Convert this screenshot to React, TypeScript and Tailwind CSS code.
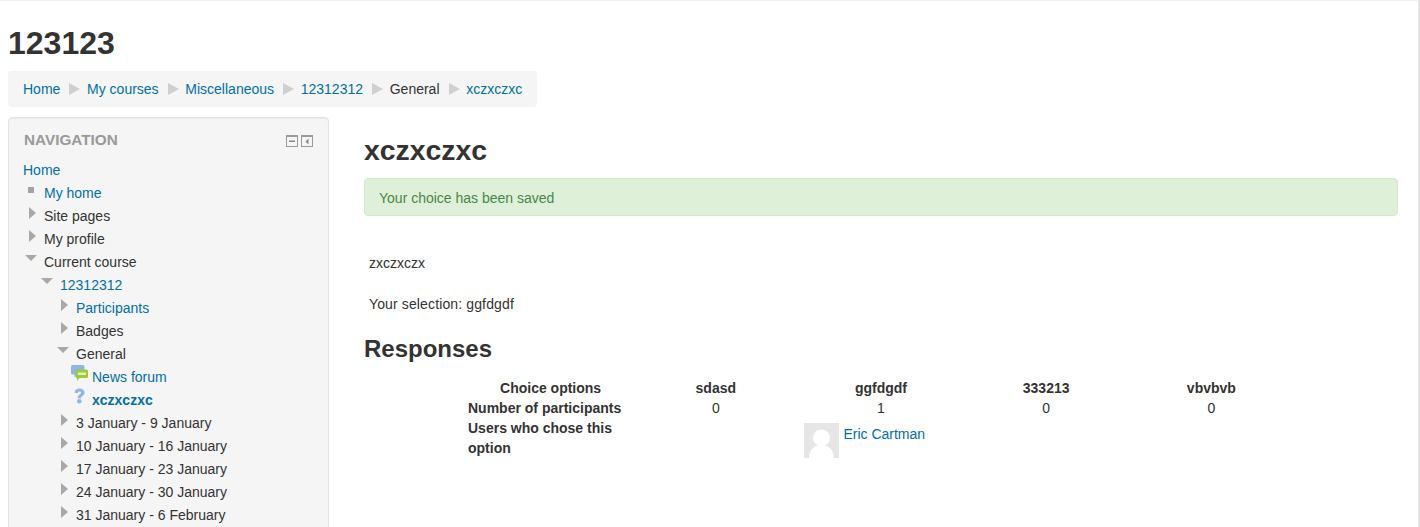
const link = "text-[#0070a8]"

function ArrowRight() {
  return (
    <svg width="7" height="12" viewBox="0 0 7 12" className="-mt-[5px] ml-[6px] shrink-0">
      <path d="M0 0 L7 6 L0 12 Z" fill="#a8a8a8" />
    </svg>
  )
}

function ArrowDown() {
  return (
    <svg width="12" height="6" viewBox="0 0 12 6" className="-mt-[8px] ml-[2px] shrink-0">
      <path d="M0 0 H12 L6 6 Z" fill="#a8a8a8" />
    </svg>
  )
}

function Bullet() {
  return <div className="-mt-[6px] ml-[5px] h-[6px] w-[6px] shrink-0 bg-[#a3a3a3]" />
}

function ForumIcon() {
  return (
    <svg width="17" height="17" viewBox="0 0 17 17" className="-mt-[6px] -mr-[1px] shrink-0">
      <path d="M1.5 0 H12 Q13.5 0 13.5 1.5 V8 Q13.5 9.5 12 9.5 H6 L3.5 12.5 V9.5 H1.5 Q0 9.5 0 8 V1.5 Q0 0 1.5 0 Z" fill="#8fb4ea" />
      <path d="M6 4.5 H15.5 Q17 4.5 17 6 V11.5 Q17 13 15.5 13 H8.5 L6 16 V13 Q4.5 13 4.5 11.5 V6 Q4.5 4.5 6 4.5 Z" fill="#9ccb35" />
      <rect x="7" y="7.5" width="8" height="2.5" fill="#e4f2b8" />
    </svg>
  )
}

function ChoiceIcon() {
  return (
    <svg width="11" height="16" viewBox="0 0 11 16" className="-mt-[7px] ml-[3px] shrink-0">
      <path d="M0.5 5 C0.5 1.9 2.7 0.4 5.5 0.4 C8.6 0.4 10.6 2.1 10.6 4.5 C10.6 6.5 9.4 7.4 8.1 8.2 C7.3 8.7 7 9.1 7 10.2 H3.7 C3.7 8.2 4.4 7.3 5.6 6.5 C6.6 5.9 7.1 5.4 7.1 4.8 C7.1 4.1 6.4 3.6 5.5 3.6 C4.5 3.6 3.9 4.2 3.9 5 Z" fill="#8db5ee" />
      <circle cx="5.3" cy="13.3" r="2.3" fill="#8db5ee" />
    </svg>
  )
}

function Avatar() {
  return (
    <svg width="35" height="35" viewBox="0 0 35 35" className="shrink-0">
      <rect width="35" height="35" fill="#e6e6e6" />
      <circle cx="17.5" cy="15" r="8.5" fill="#fff" />
      <path d="M5 35 C5 26 11 22 17.5 22 C24 22 30 26 30 35 Z" fill="#fff" />
    </svg>
  )
}

function Crumb({ label, plain = false }: { label: string; plain?: boolean }) {
  return (
    <>
      <svg width="11" height="12" viewBox="0 0 11 12" className="mr-[6.7px] ml-[9px] shrink-0">
        <path d="M0 0 L11 6 L0 12 Z" fill="#cfcfcf" />
      </svg>
      <span className={plain ? "text-[#333]" : link}>{label}</span>
    </>
  )
}

const navItems = [
  { label: "My home", indent: "pl-0", icon: "bullet", isLink: true },
  { label: "Site pages", indent: "pl-0", icon: "right" },
  { label: "My profile", indent: "pl-0", icon: "right" },
  { label: "Current course", indent: "pl-0", icon: "down" },
  { label: "12312312", indent: "pl-4", icon: "down", isLink: true },
  { label: "Participants", indent: "pl-8", icon: "right", isLink: true },
  { label: "Badges", indent: "pl-8", icon: "right" },
  { label: "General", indent: "pl-8", icon: "down" },
  { label: "News forum", indent: "pl-12", icon: "forum", isLink: true },
  { label: "xczxczxc", indent: "pl-12", icon: "choice", isLink: true, bold: true },
  { label: "3 January - 9 January", indent: "pl-8", icon: "right" },
  { label: "10 January - 16 January", indent: "pl-8", icon: "right" },
  { label: "17 January - 23 January", indent: "pl-8", icon: "right" },
  { label: "24 January - 30 January", indent: "pl-8", icon: "right" },
  { label: "31 January - 6 February", indent: "pl-8", icon: "right" },
]

function NavIcon({ name }: { name: string }) {
  if (name === "bullet") return <Bullet />
  if (name === "right") return <ArrowRight />
  if (name === "down") return <ArrowDown />
  if (name === "forum") return <ForumIcon />
  return <ChoiceIcon />
}

function BlockControls() {
  return (
    <div className="flex gap-[3px] pt-[1px]">
      <svg width="12" height="12" viewBox="0 0 12 12">
        <rect x="0.5" y="0.5" width="11" height="11" fill="#f5f5f5" stroke="#9a9a9a" />
        <rect x="0" y="0" width="12" height="2" fill="#9a9a9a" />
        <rect x="3" y="5.5" width="6" height="1.5" fill="#888" />
      </svg>
      <svg width="12" height="12" viewBox="0 0 12 12">
        <rect x="0.5" y="0.5" width="11" height="11" fill="#f5f5f5" stroke="#9a9a9a" />
        <rect x="0" y="0" width="12" height="2" fill="#9a9a9a" />
        <path d="M7.5 3.5 L4.5 6.5 L7.5 9.5 Z" fill="#888" />
      </svg>
    </div>
  )
}

const options = ["sdasd", "ggfdgdf", "333213", "vbvbvb"]
const counts = [0, 1, 0, 0]

export default function App() {
  return (
    <div
      className="h-[527px] w-full overflow-hidden border-t border-t-[#f2f2f2] border-r-2 border-r-[#e6e6e6] bg-white text-sm leading-[20px] text-[#333]"
      style={{ fontFamily: '"Liberation Sans", Arial, sans-serif' }}
    >
      <div className="px-2 pt-[22px]">
        <h1 className="text-[32px] leading-10 font-bold">123123</h1>

        <div className="mt-2 flex h-9 w-fit items-center rounded bg-[#f5f5f5] px-[15px]">
          <span className={link}>Home</span>
          <Crumb label="My courses" />
          <Crumb label="Miscellaneous" />
          <Crumb label="12312312" />
          <Crumb label="General" plain />
          <Crumb label="xczxczxc" />
        </div>

        <div className="mt-[10px] flex items-start">
          <aside className="h-[500px] w-[321px] shrink-0 rounded border border-[#e3e3e3] bg-[#f5f5f5] px-[14px] pt-[12px] shadow-[inset_0_1px_1px_rgba(0,0,0,0.05)]">
            <div className="flex items-center justify-between pr-[1px] pl-[1px]">
              <h2 className="text-[15.3px] leading-[20px] font-bold text-[#999]">NAVIGATION</h2>
              <BlockControls />
            </div>
            <div className="mt-[9px]">
              <div className={`h-[22px] leading-[23px] ${link}`}>Home</div>
              {navItems.map((item) => (
                <div key={item.label} className={`flex h-[23px] items-center ${item.indent}`}>
                  <div className="flex w-[21px] shrink-0 items-center">
                    <NavIcon name={item.icon} />
                  </div>
                  <span className={`${item.isLink ? link : ""} ${item.bold ? "font-bold" : ""}`}>{item.label}</span>
                </div>
              ))}
            </div>
          </aside>

          <main className="ml-[35px] w-[1034px] shrink-0">
            <h2 className="mt-[15px] text-[28.4px] leading-[36px] font-bold">xczxczxc</h2>
            <div className="mt-[10px] flex h-[38px] items-center rounded border border-[#d6e9c6] bg-[#dff0d8] px-[14px] pt-[1px] text-[#468847]">
              Your choice has been saved
            </div>
            <p className="mt-[37px] pl-[5px]">zxczxczx</p>
            <p className="mt-[21px] pl-[5px] tracking-[0.13px]">Your selection: ggfdgdf</p>
            <h2 className="mt-[20px] text-2xl leading-[30px] font-bold">Responses</h2>
            <table className="mx-auto mt-[14px] w-[826px] table-fixed border-collapse">
              <tbody>
                <tr className="h-[20px] font-bold">
                  <td className="text-center">Choice options</td>
                  {options.map((o) => (
                    <td key={o} className="text-center">{o}</td>
                  ))}
                </tr>
                <tr className="h-[20px]">
                  <td className="font-bold">Number of participants</td>
                  {counts.map((c, i) => (
                    <td key={i} className="text-center">{c}</td>
                  ))}
                </tr>
                <tr>
                  <td className="align-top font-bold">Users who chose this option</td>
                  <td />
                  <td className="pt-[5px] pl-[6px] align-top">
                    <div className="flex items-start gap-[4px]">
                      <Avatar />
                      <span className={`pt-[1px] leading-[20px] ${link}`}>Eric Cartman</span>
                    </div>
                  </td>
                  <td />
                  <td />
                </tr>
              </tbody>
            </table>
          </main>
        </div>
      </div>
    </div>
  )
}
